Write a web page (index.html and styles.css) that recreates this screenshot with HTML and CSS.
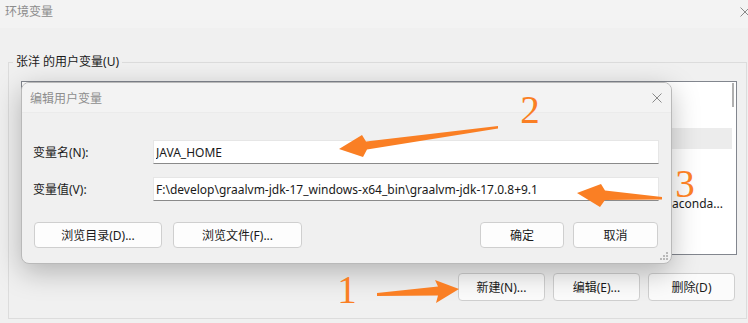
FILE: index.html
```html
<!DOCTYPE html>
<html lang="zh-CN">
<head>
<meta charset="UTF-8">
<meta name="viewport" content="width=device-width, initial-scale=1.0">
<title>环境变量</title>
<link rel="stylesheet" href="styles.css">
</head>
<body>
<div class="win">
<div class="win-title">
<span>环境变量</span>
<svg class="close" width="10" height="10" viewBox="0 0 10 10"><path d="M0.5 0.5L9.5 9.5M9.5 0.5L0.5 9.5"/></svg>
</div>

<fieldset class="group">
<legend>张洋 的用户变量(U)</legend>
<div class="list">
<div class="list-body">
<div class="list-head"></div>
<div class="row"></div>
<div class="row sel"></div>
<div class="row"></div>
<div class="row"></div>
<div class="row"><span class="c-val end">aconda...</span></div>
<div class="row"></div>
</div>
<div class="scroll"><div class="thumb"></div></div>
</div>
<div class="actions">
<button type="button" class="btn">新建(N)...</button>
<button type="button" class="btn">编辑(E)...</button>
<button type="button" class="btn">删除(D)</button>
</div>
</fieldset>
</div>

<div class="dialog">
<div class="dlg-title">
<span>编辑用户变量</span>
<svg class="close" width="10" height="10" viewBox="0 0 10 10"><path d="M0.5 0.5L9.5 9.5M9.5 0.5L0.5 9.5"/></svg>
</div>
<div class="dlg-body">
<div class="field">
<label for="var-name">变量名(N):</label>
<input type="text" id="var-name" value="JAVA_HOME" readonly>
</div>
<div class="field">
<label for="var-value">变量值(V):</label>
<input type="text" id="var-value" value="F:\develop\graalvm-jdk-17_windows-x64_bin\graalvm-jdk-17.0.8+9.1" readonly>
</div>
<div class="dlg-actions">
<button type="button" class="btn btn-dir">浏览目录(D)...</button>
<button type="button" class="btn btn-file">浏览文件(F)...</button>
<span class="spacer"></span>
<button type="button" class="btn btn-ok">确定</button>
<button type="button" class="btn btn-cancel">取消</button>
</div>
</div>
<svg class="grip" width="8" height="8" viewBox="0 0 8 8">
<rect x="6" y="0" width="2" height="2"/>
<rect x="3" y="3" width="2" height="2"/><rect x="6" y="3" width="2" height="2"/>
<rect x="0" y="6" width="2" height="2"/><rect x="3" y="6" width="2" height="2"/><rect x="6" y="6" width="2" height="2"/>
</svg>
</div>

<!-- orange annotations drawn over the screenshot -->
<svg class="marks" width="748" height="323" viewBox="0 0 748 323">
<polygon points="498,126 366,141.5 362,135 339,149 363,157 367,149.5 498,128.5"/>
<polygon points="662,197 605,190.5 601,184 577,193 600,207 605,200 662,199.5"/>
<polygon points="377,293 438,286.5 435,280 459,289 436,303 438,295.5 377,296"/>
<text x="530" y="123">2</text>
<text x="685" y="197">3</text>
<text x="347" y="303">1</text>
</svg>
</body>
</html>
```

FILE: styles.css
```css
body {
margin: 0;
width: 748px;
height: 323px;
overflow: hidden;
position: relative;
background-color: #f0f0f0;
font-family: "Noto Sans", "Noto Sans CJK SC", sans-serif;
font-size: 12px;
color: #1a1a1a;
}
.win-title {
height: 28px;
display: flex;
align-items: flex-start;
justify-content: space-between;
padding: 3px 0 0 5px;
box-sizing: border-box;
background-color: #f3f3f3;
color: #8c8c8c;
line-height: 17px;
}
.win-title .close {
margin: 4px -2px 0 0;
}
.close path {
stroke: #8a8a8a;
stroke-width: 1;
fill: none;
}
.group {
margin: 26px 1px 0 8px;
padding: 11px 9px 17px 12px;
border: 1px solid #dcdcdc;
min-inline-size: 0;
}
.group legend {
margin-left: -8px;
padding: 0 3px;
line-height: 16px;
color: #1a1a1a;
}
.list {
height: 174px;
box-sizing: border-box;
border: 1px solid #82868e;
background-color: #fff;
display: flex;
}
.list-body {
flex: 1;
overflow: hidden;
}
.list-head {
height: 25px;
}
.row {
display: flex;
height: 21px;
align-items: center;
white-space: nowrap;
}
.row.sel {
background-color: #ececec;
}
.c-val {
flex: 1;
overflow: hidden;
}
.c-val.end {
text-align: right;
padding: 3px 9px 0 0;
}
.scroll {
width: 4px;
}
.scroll .thumb {
width: 2px;
height: 24px;
margin: 1px 0 0 0;
background-color: #b0b0b0;
}
.actions {
display: flex;
justify-content: flex-end;
gap: 8px;
margin-top: 18px;
padding-right: 2px;
}
.btn {
height: 28px;
width: 87px;
padding: 0;
border: 1px solid #cfcfcf;
border-radius: 4px;
background-color: #fbfbfb;
font-family: inherit;
font-size: 12px;
color: #1a1a1a;
}
.dialog {
position: absolute;
left: 21px;
top: 82px;
width: 651px;
height: 182px;
box-sizing: border-box;
border: 1px solid #b9b9b9;
border-radius: 8px;
background-color: #f0f0f0;
box-shadow: 0 8px 28px rgba(0, 0, 0, 0.26);
overflow: hidden;
}
.dlg-title {
height: 29px;
display: flex;
align-items: center;
justify-content: space-between;
padding: 0 9px 0 8px;
background-color: #f3f3f3;
color: #8e8e8e;
border-bottom: 1px solid #ebebeb;
}
.dlg-body {
padding: 27px 12px 0 11px;
}
.field {
display: flex;
align-items: center;
height: 24px;
}
.field + .field {
margin-top: 13px;
}
.field label {
width: 120px;
flex-shrink: 0;
}
.field input {
flex: 1;
min-width: 0;
height: 24px;
box-sizing: border-box;
padding: 0 2px;
border: 1px solid #e6e6e6;
border-bottom-color: #8a8a8a;
background-color: #fff;
font-family: inherit;
font-size: 12px;
color: #1a1a1a;
outline: none;
}
.dlg-actions {
display: flex;
margin-top: 21px;
padding: 0 1px;
}
.dlg-actions .btn {
height: 26px;
background-color: #fdfdfd;
}
.btn-dir {
width: 128px;
}
.btn-file {
width: 129px;
margin-left: 11px;
}
.spacer {
flex: 1;
}
.btn-ok {
width: 84px;
}
.btn-cancel {
width: 85px;
margin-left: 9px;
}
.grip {
position: absolute;
right: 3px;
bottom: 3px;
}
.grip rect {
fill: #b8b8b8;
}
.marks {
position: absolute;
left: 0;
top: 0;
pointer-events: none;
}
.marks polygon {
fill: #fa7f24;
}
.marks text {
fill: #fa7f24;
font-family: "Liberation Serif", serif;
font-size: 39px;
text-anchor: middle;
}
```
